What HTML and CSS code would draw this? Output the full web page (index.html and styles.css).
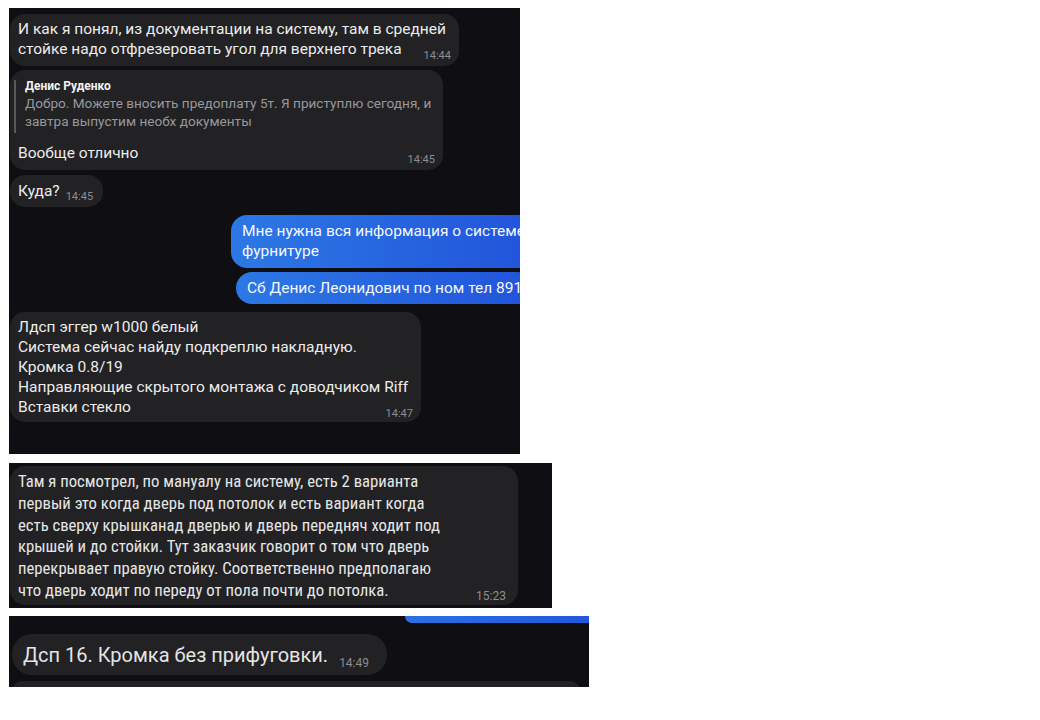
FILE: index.html
```html
<!DOCTYPE html>
<html lang="ru">
<head>
<meta charset="utf-8" />
<title>Переписка</title>
<link rel="stylesheet" href="styles.css">
</head>
<body>

<div class="shot shot-a">
  <div class="msg msg-doc">
    И как я понял, из документации на систему, там в средней<br>
    стойке надо отфрезеровать угол для верхнего трека<span class="time">14:44</span>
  </div>

  <div class="msg msg-reply">
    <div class="quote">
      <div class="quote-name">Денис Руденко</div>
      <div class="quote-text">Добро. Можете вносить предоплату 5т. Я приступлю сегодня, и<br>завтра выпустим необх документы</div>
    </div>
    <div class="reply-body">Вообще отлично<span class="time">14:45</span></div>
  </div>

  <div class="msg msg-short">Куда?<span class="time inline">14:45</span></div>

  <div class="msg out out-first">
    Мне нужна вся информация о системе<br>фурнитуре
  </div>
  <div class="msg out out-second">Сб Денис Леонидович по ном тел 891</div>

  <div class="msg msg-list">
    Лдсп эггер w1000 белый<br>
    Система сейчас найду подкреплю накладную.<br>
    Кромка 0.8/19<br>
    Направляющие скрытого монтажа с доводчиком Riff<br>
    Вставки стекло<span class="time">14:47</span>
  </div>
</div>

<div class="shot shot-b">
  <div class="msg msg-long">
    Там я посмотрел, по мануалу на систему, есть 2 варианта<br>
    первый это когда дверь под потолок и есть вариант когда<br>
    есть сверху крышканад дверью и дверь передняч ходит под<br>
    крышей и до стойки. Тут заказчик говорит о том что дверь<br>
    перекрывает правую стойку. Соответственно предполагаю<br>
    что дверь ходит по переду от пола почти до потолка.<span class="time">15:23</span>
  </div>
</div>

<div class="shot shot-c">
  <div class="out-tail"></div>
  <div class="msg msg-big">Дсп 16. Кромка без прифуговки.<span class="time inline">14:49</span></div>
  <div class="msg msg-next"></div>
</div>

</body>
</html>
```

FILE: styles.css
```css
html, body {
    background: #ffffff;
}

body {
    margin: 0;
    padding: 8px 0 0 9px;
    font-family: Roboto, "Noto Sans", sans-serif;
    color: #ececec;
}

/* dark chat captures */
.shot {
    display: flex;
    flex-direction: column;
    align-items: flex-start;
    background: #0f0f13;
    overflow: hidden;
}

.shot-a {
    width: 511px;
    height: 446px;
}

.shot-b {
    width: 543px;
    height: 145px;
    margin-top: 9px;
}

.shot-c {
    width: 580px;
    height: 71px;
    margin-top: 8px;
}

.msg {
    flex-shrink: 0;
    background: #222225;
    border-radius: 15px;
    margin-left: 1px;
    padding: 5px 8px 7px;
    font-size: 15.5px;
    line-height: 20px;
    white-space: nowrap;
    box-sizing: border-box;
}

.time {
    float: right;
    position: relative;
    top: 7px;
    font-size: 11px;
    color: #8c8c91;
}

.time.inline {
    float: none;
    top: 4px;
    margin-left: 6px;
}

.msg-doc {
    width: 449px;
    margin-top: 6px;
    height: 52px;
}

.msg-reply {
    width: 433px;
    height: 100px;
    margin-top: 4px;
    padding-top: 10px;
}

.quote {
    margin-left: -4px;
    padding: 0 0 3px 9px;
    border-left: 2px solid #59595d;
}

.quote-name {
    font-size: 12px;
    line-height: 12px;
    font-weight: 700;
    color: #f2f2f2;
}

.quote-text {
    margin-top: 2px;
    font-size: 13.6px;
    line-height: 18px;
    color: #98989c;
}

.reply-body {
    margin-top: 10px;
}

.msg-short {
    margin-top: 5px;
    height: 32px;
    padding: 6px 10px 0 8px;
}

.out {
    background: linear-gradient(90deg, #2d78e5, #2154da);
    border-radius: 16px;
    padding: 6px 11px 8px;
    color: #f4f7ff;
}

.out-first {
    margin: 8px 0 0 222px;
    height: 53px;
}

.out-second {
    margin: 4px 0 0 227px;
    height: 32px;
    padding-top: 6px;
}

.msg-list {
    width: 411px;
    height: 110px;
    margin-top: 8px;
    padding-top: 5px;
}

.msg-long {
    width: 508px;
    height: 139px;
    margin-top: 3px;
    padding: 5px 12px 0 8px;
    font-family: "Liberation Sans Narrow", "Roboto Condensed", Roboto, sans-serif;
    font-size: 16.7px;
    line-height: 21.8px;
    color: #e6e6e6;
}

.msg-long .time {
    font-family: Roboto, sans-serif;
    font-size: 12px;
    top: 6px;
}

.out-tail {
    flex-shrink: 0;
    align-self: flex-end;
    width: 184px;
    height: 7px;
    background: linear-gradient(90deg, #2b70e3, #2257db);
    border-radius: 0 0 0 10px;
}

.msg-big {
    margin: 11px 0 0 3px;
    height: 41px;
    border-radius: 20px;
    padding: 9px 18px 0 11px;
    font-size: 20px;
    line-height: 24px;
    color: #e4e4e4;
}

.msg-big .time {
    font-size: 12px;
    top: 5px;
    margin-left: 11px;
}

.msg-next {
    width: 568px;
    height: 20px;
    margin: 6px 0 0 3px;
    border-radius: 16px;
}
```
